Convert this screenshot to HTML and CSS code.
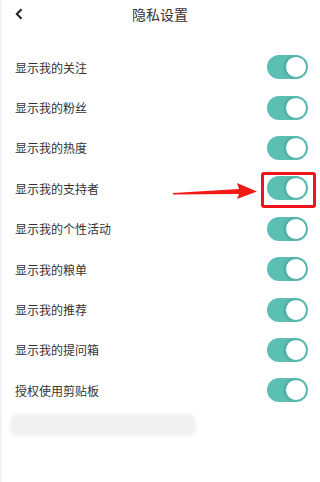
FILE: index.html
```html
<!DOCTYPE html>
<html lang="zh">
<head>
<meta charset="utf-8">
<link rel="stylesheet" href="styles.css">
</head>
<body>
<div class="page">
  <header class="topbar">
    <svg class="back" width="10" height="12" viewBox="0 0 10 12"><path d="M7.5 1.2 L2.8 6 L7.5 10.8" fill="none" stroke="#222" stroke-width="2"/></svg>
    <div class="title">隐私设置</div>
  </header>
  <ul class="list">
    <li class="row"><span>显示我的关注</span><span class="toggle"><span class="knob"></span></span></li>
    <li class="row"><span>显示我的粉丝</span><span class="toggle"><span class="knob"></span></span></li>
    <li class="row"><span>显示我的热度</span><span class="toggle"><span class="knob"></span></span></li>
    <li class="row"><span>显示我的支持者</span><span class="toggle"><span class="knob"></span></span></li>
    <li class="row"><span>显示我的个性活动</span><span class="toggle"><span class="knob"></span></span></li>
    <li class="row"><span>显示我的粮单</span><span class="toggle"><span class="knob"></span></span></li>
    <li class="row"><span>显示我的推荐</span><span class="toggle"><span class="knob"></span></span></li>
    <li class="row"><span>显示我的提问箱</span><span class="toggle"><span class="knob"></span></span></li>
    <li class="row"><span>授权使用剪贴板</span><span class="toggle"><span class="knob"></span></span></li>
  </ul>
  <div class="blurred"></div>
  <div class="highlight"></div>
  <svg class="arrow" width="90" height="20" viewBox="0 0 90 20"><polygon points="0,11 66,7 64,1 84,9.5 64,17 66,12 0,12.5" fill="#f21a14"/></svg>
</div>
</body>
</html>
```

FILE: styles.css
```css
html, body {
  margin: 0;
  padding: 0;
  background: #fff;
}
.page {
  position: relative;
  width: 320px;
  height: 482px;
  box-sizing: border-box;
  border-left: 2px solid #edf2fa;
  font-family: "Noto Sans CJK SC", "Noto Sans", sans-serif;
  color: #333;
  overflow: hidden;
}
.topbar {
  height: 28px;
  display: flex;
  align-items: center;
  justify-content: center;
  position: relative;
}
.back {
  position: absolute;
  left: 12px;
  top: 8px;
}
.title {
  font-size: 14px;
  color: #333;
  line-height: 1;
  margin-left: -2px;
}
.list {
  list-style: none;
  margin: 19px 0 0 0;
  padding: 0;
}
.row {
  height: 40.4px;
  display: flex;
  align-items: center;
  justify-content: space-between;
  padding: 0 12px 0 13px;
  font-size: 12px;
  color: #333;
}
.toggle {
  width: 41px;
  height: 24px;
  border-radius: 12px;
  background: #5bbfb4;
  display: flex;
  align-items: center;
  justify-content: flex-end;
  box-sizing: border-box;
  padding-right: 1px;
}
.knob {
  width: 22px;
  height: 22px;
  border-radius: 50%;
  background: #fff;
  box-sizing: border-box;
  border: 1px solid #4fb2a8;
  box-shadow: -1px 0 2px rgba(0,0,0,0.15);
}
.blurred {
  margin: 3px 0 0 8px;
  width: 186px;
  height: 22px;
  border-radius: 8px;
  background: #f1f1f1;
  filter: blur(1.5px);
}
.highlight {
  position: absolute;
  left: 259px;
  top: 172px;
  width: 55px;
  height: 36px;
  box-sizing: border-box;
  border: 3px solid #f0141a;
  border-radius: 3px;
}
.arrow {
  position: absolute;
  left: 171px;
  top: 182px;
}
```
